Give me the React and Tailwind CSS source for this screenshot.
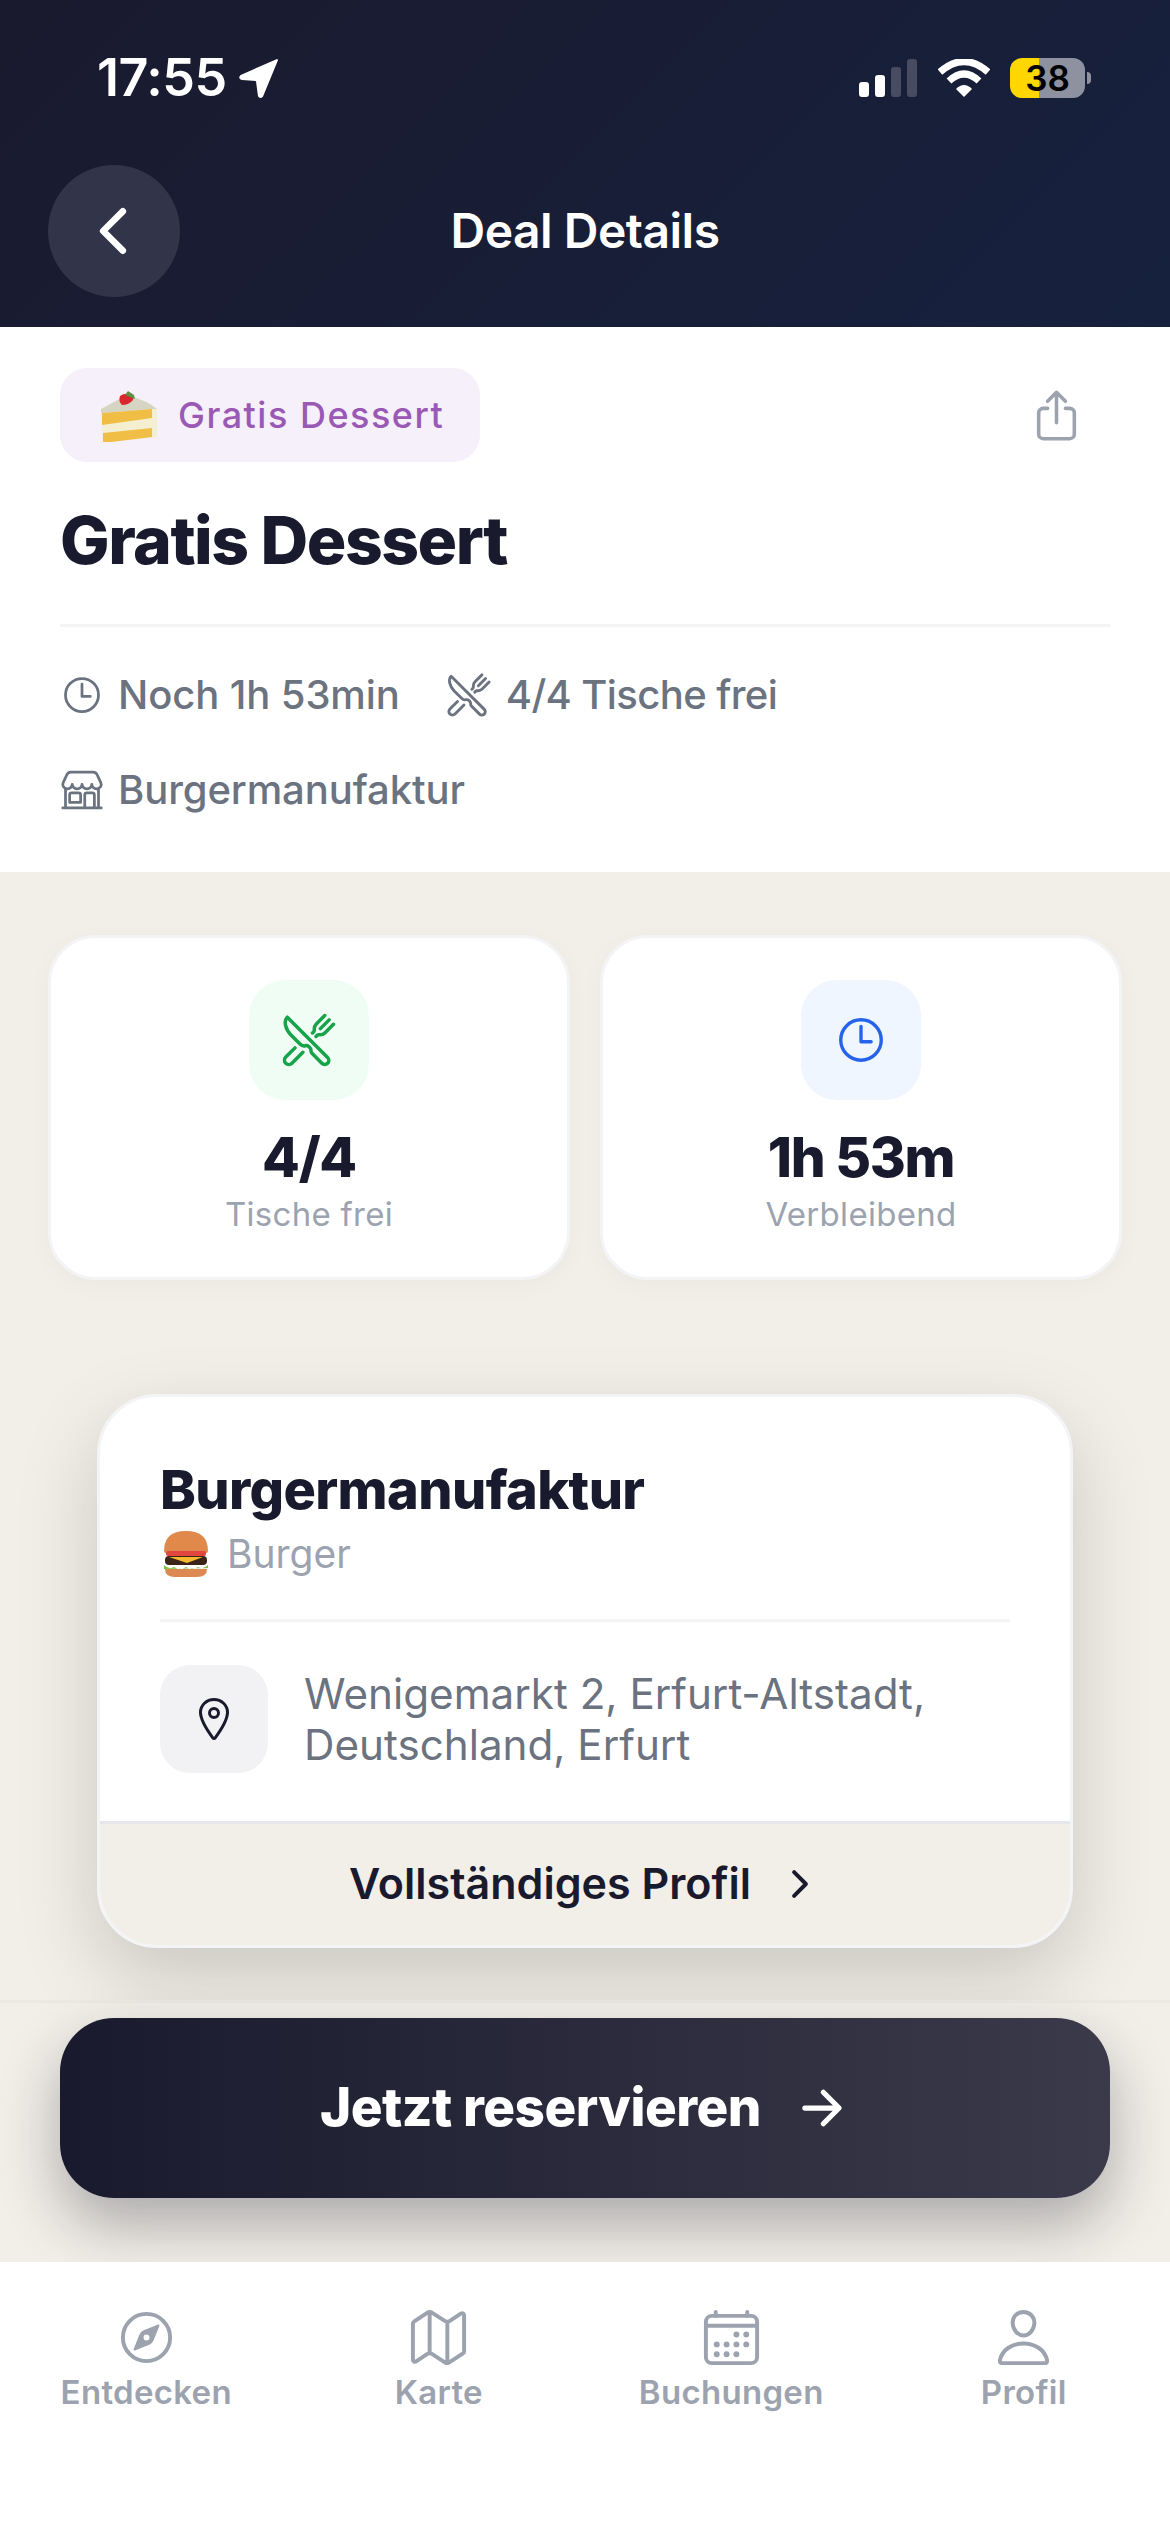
import React from "react";
import {
  IoChevronBack, IoChevronForward, IoArrowForward, IoShareOutline, IoTimeOutline,
  IoRestaurantOutline, IoStorefrontOutline, IoLocationOutline, IoCompassOutline,
  IoMapOutline, IoCalendarOutline, IoPersonOutline,
} from "react-icons/io5";

function Cake() {
  return (
    <svg width="60" height="54" viewBox="0 -4 60 54" className="shrink-0">
      <path d="M3 17 L29 3 Q50 9 59 17 L59 45 L5 51 Z" fill="#f5efd2" />
      <path d="M3 17 L29 3 Q50 9 59 17 L54 17 L3 21 Z" fill="#d6d4c2" />
      <path d="M4 21 L54 17 L54 26 L4 33 Z" fill="#f0bd45" />
      <path d="M5 41 L54 36 L54 45 L5 51 Z" fill="#f0bd45" />
      <path d="M22 4 Q26 1 31 2 Q36 4 35 8 Q31 13 24 13 Q20 9 22 4 Z" fill="#d9272e" />
      <path d="M27 3 L30 -1 L36 3 L37 7 L32 5 Z" fill="#5d8f45" />
    </svg>
  );
}

function Burger() {
  return (
    <svg width="46" height="46" viewBox="0 0 46 46" className="shrink-0">
      <path d="M1 20 Q1 0 23 0 Q45 0 45 20 Q45 22 43 22 L3 22 Q1 22 1 20 Z" fill="#e0894b" />
      <rect x="3" y="20" width="40" height="5" rx="2" fill="#e2473f" />
      <rect x="2" y="25" width="42" height="9" rx="4" fill="#3a2317" />
      <path d="M6 26 L40 26 L24 32 Z" fill="#f5b82e" />
      <path d="M2 38 L44 38 Q44 46 34 46 L12 46 Q2 46 2 38 Z" fill="#dd8a52" />
      <path d="M1 34 Q6 39 11 36 Q17 40 23 36 Q29 40 35 36 Q40 39 45 34 L45 37 L1 38 Z" fill="#7cc242" />
    </svg>
  );
}

function StatCard({ icon, box, value, label }) {
  return (
    <div className="flex h-[345px] flex-1 flex-col items-center rounded-[48px] border-[3px] border-[#f3f4f6] bg-white pt-[42px] shadow-[0_6px_24px_rgba(0,0,0,0.03)]">
      <div className={`flex h-[120px] w-[120px] items-center justify-center rounded-[36px] ${box}`}>{icon}</div>
      <div className="mt-[23px] text-[55px] leading-[68px] font-extrabold tracking-[-1.3px] text-[#1a1a2e]">{value}</div>
      <div className="mt-[3px] text-[33px] leading-[40px] tracking-[0.3px] text-[#9ca3af]">{label}</div>
    </div>
  );
}

function Tab({ icon, label }) {
  return (
    <div className="flex flex-1 flex-col items-center">
      {icon}
      <div className="mt-[3px] text-[33px] leading-[40px] font-semibold tracking-[0.3px] text-[#9ca3af]">{label}</div>
    </div>
  );
}

export default function App() {
  return (
    <div className="flex h-[2532px] w-[1170px] flex-col overflow-hidden bg-[#f2efe8] font-['Inter',sans-serif]">
      <header className="h-[327px] shrink-0 bg-[linear-gradient(135deg,#1a1a2e,#16213e)] pt-[56px]">
        <div className="flex h-[44px] items-center justify-between pr-[79px] pl-[97px]">
          <div className="flex items-center gap-[12px] text-white">
            <span className="text-[52px] leading-[44px] font-semibold tracking-[-0.5px]">17:55</span>
            <svg width="40" height="40" viewBox="0 0 38 38"><path d="M36 2 L2 17 Q0 19 3 20 L17 21 L19 36 Q20 38 22 36 Z" fill="white" stroke="white" strokeWidth="2" strokeLinejoin="round" /></svg>
          </div>
          <div className="flex items-center">
            <svg width="60" height="38" viewBox="0 0 60 38">
              <rect x="0" y="23" width="10" height="15" rx="3" fill="#fff" />
              <rect x="16" y="16" width="10" height="22" rx="3" fill="#fff" />
              <rect x="32" y="8" width="10" height="30" rx="3" fill="#474c60" />
              <rect x="48" y="0" width="10" height="38" rx="3" fill="#474c60" />
            </svg>
            <svg width="52" height="38" viewBox="0 0 52 38" className="ml-[19px]">
              <path d="M2 13 Q26 -8 50 13" fill="none" stroke="#fff" strokeWidth="7" />
              <path d="M11 22 Q26 8 41 22" fill="none" stroke="#fff" strokeWidth="7" />
              <path d="M18 30 Q26 22 34 30 L26 38 Z" fill="#fff" />
            </svg>
            <div className="ml-[20px] flex h-[40px] w-[75px] items-center justify-center rounded-[12px] bg-[linear-gradient(90deg,#ffd600_39%,#8e919f_39%)] text-[35px] leading-none font-semibold text-black">38</div>
            <div className="ml-[2px] h-[12px] w-[4px] rounded-r-full bg-[#8e919f]" />
          </div>
        </div>
        <div className="mt-[65px] grid grid-cols-[132px_1fr_132px] items-center px-[48px]">
          <div className="flex h-[132px] w-[132px] items-center justify-center rounded-full bg-[#32344a]">
            <IoChevronBack size={70} color="#fff" className="-ml-[2px]" />
          </div>
          <div className="text-center text-[48px] leading-[56px] font-semibold tracking-[-0.5px] text-white">Deal Details</div>
        </div>
      </header>

      <section className="h-[545px] shrink-0 bg-white px-[60px] pt-[41px]">
        <div className="flex items-center justify-between">
          <div className="flex h-[94px] w-[420px] items-center gap-[20px] rounded-[27px] bg-[#f5f0fa] pl-[38px]">
            <Cake />
            <span className="text-[36px] font-medium tracking-[1.5px] text-[#9b59b6]">Gratis Dessert</span>
          </div>
          <IoShareOutline size={57} color="#9ca3af" className="mr-[25px]" />
        </div>
        <h1 className="mt-[38px] text-[66px] leading-[80px] font-extrabold tracking-[-1.5px] text-[#1a1a2e]">Gratis Dessert</h1>
        <div className="mt-[44px] h-[3px] bg-[#f3f4f6]" />
        <div className="mt-[43px] flex h-[50px] items-center text-[40px] leading-[50px] font-medium text-[#6b7280]">
          <IoTimeOutline size={44} className="shrink-0" />
          <span className="ml-[14px] tracking-[-0.1px]">Noch 1h 53min</span>
          <IoRestaurantOutline size={46} className="ml-[46px] shrink-0" />
          <span className="ml-[14px] tracking-[-0.6px]">4/4 Tische frei</span>
        </div>
        <div className="mt-[45px] flex h-[50px] items-center text-[40px] leading-[50px] font-medium tracking-[-0.1px] text-[#6b7280]">
          <IoStorefrontOutline size={44} className="shrink-0" />
          <span className="ml-[14px]">Burgermanufaktur</span>
        </div>
      </section>

      <main className="flex flex-1 flex-col">
        <div className="mt-[63px] flex gap-[30px] px-[48px]">
          <StatCard box="bg-[#f0fdf4]" value="4/4" label="Tische frei" icon={<IoRestaurantOutline size={56} color="#16a34a" />} />
          <StatCard box="bg-[#eff6ff]" value="1h 53m" label="Verbleibend" icon={<IoTimeOutline size={54} color="#2563eb" />} />
        </div>

        <div className="mx-[97px] mt-[114px] h-[554px] overflow-hidden rounded-[60px] border-[3px] border-[#f3f4f6] bg-white shadow-[0_30px_80px_rgba(0,0,0,0.17)]">
          <div className="h-[424px] px-[60px] pt-[63px]">
            <div className="text-[54px] leading-[60px] font-extrabold tracking-[-0.6px] text-[#1a1a2e]">Burgermanufaktur</div>
            <div className="mt-[10px] flex items-center gap-[18px] pl-[3px] text-[39px] leading-[48px] text-[#9ca3af]">
              <Burger />
              <span>Burger</span>
            </div>
            <div className="mt-[41px] h-[3px] bg-[#f3f4f6]" />
            <div className="mt-[43px] flex items-center gap-[36px]">
              <div className="flex h-[108px] w-[108px] shrink-0 items-center justify-center rounded-[30px] bg-[#f2f2f5]">
                <IoLocationOutline size={48} color="#1a1a2e" />
              </div>
              <div className="text-[42.2px] leading-[51px] text-[#6b7280]">Wenigemarkt 2, Erfurt-Altstadt,<br />Deutschland, Erfurt</div>
            </div>
          </div>
          <div className="flex h-[124px] items-center justify-center gap-[28px] border-t-[3px] border-[#e5e7eb] bg-[#f2efe8] pb-[2px]">
            <span className="text-[43px] font-semibold text-[#1a1a2e]">Vollständiges Profil</span>
            <IoChevronForward size={42} color="#1a1a2e" />
          </div>
        </div>

        <div className="relative mt-[52px] flex-1 border-t-[3px] border-[#ebe9e2] bg-[#f2efe8] px-[60px] pt-[15px]">
          <div className="flex h-[180px] items-center justify-center gap-[33px] rounded-[54px] bg-[linear-gradient(90deg,#1a1a2e,#3a3a4a)] shadow-[0_27px_60px_rgba(26,26,46,0.33)]">
            <span className="text-[53px] font-extrabold tracking-[-0.5px] text-white">Jetzt reservieren</span>
            <IoArrowForward size={56} color="#fff" />
          </div>
        </div>
      </main>

      <nav className="relative flex h-[270px] shrink-0 bg-white pt-[44px]">
        <Tab label="Entdecken" icon={<IoCompassOutline size={63} color="#9ca3af" />} />
        <Tab label="Karte" icon={<IoMapOutline size={63} color="#9ca3af" />} />
        <Tab label="Buchungen" icon={<IoCalendarOutline size={63} color="#9ca3af" />} />
        <Tab label="Profil" icon={<IoPersonOutline size={63} color="#9ca3af" />} />
      </nav>
    </div>
  );
}
